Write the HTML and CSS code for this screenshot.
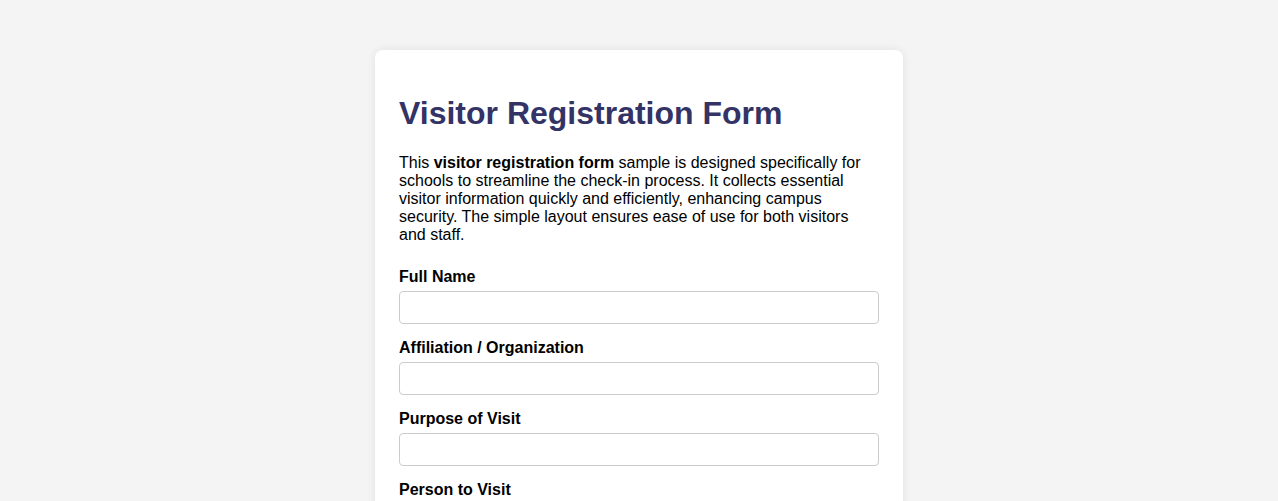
FILE: index.html
```html
<!DOCTYPE html>
<html lang="en">
<head>
<meta charset="utf-8">
<title>Visitor Registration Form</title>
<link rel="stylesheet" href="styles.css">
</head>
<body>
<div class="card">
  <h1 class="title">Visitor Registration Form</h1>
  <p class="intro">This <strong>visitor registration form</strong> sample is designed specifically for schools to streamline the check-in process. It collects essential visitor information quickly and efficiently, enhancing campus security. The simple layout ensures ease of use for both visitors and staff.</p>
  <form class="form">
    <div class="group">
      <label class="label" for="name">Full Name</label>
      <input class="input" id="name" type="text">
    </div>
    <div class="group">
      <label class="label" for="org">Affiliation / Organization</label>
      <input class="input" id="org" type="text">
    </div>
    <div class="group">
      <label class="label" for="purpose">Purpose of Visit</label>
      <input class="input" id="purpose" type="text">
    </div>
    <div class="group">
      <label class="label" for="person">Person to Visit</label>
      <input class="input" id="person" type="text">
    </div>
    <div class="group">
      <label class="label" for="date">Date of Visit</label>
      <input class="input" id="date" type="text">
    </div>
  </form>
</div>
</body>
</html>
```
FILE: styles.css
```css
html, body {
  margin: 0;
  padding: 0;
}
body {
  background: #f4f4f4;
  font-family: "Liberation Sans", Arial, sans-serif;
  color: #000;
  padding: 50px 0;
}
.card {
  width: 480px;
  margin: 0 auto;
  background: #fff;
  padding: 24px;
  border-radius: 8px;
  box-shadow: 0 0 10px rgba(0, 0, 0, 0.08);
}
.title {
  font-size: 32px;
  margin: 21.44px 0;
  color: #333366;
}
.intro {
  font-size: 16px;
  margin: 0 0 24px;
}
.form {
  margin: 0;
}
.group {
  margin-bottom: 15px;
}
.label {
  display: block;
  font-weight: bold;
  font-size: 16px;
  margin-bottom: 5px;
}
.input {
  display: block;
  box-sizing: border-box;
  width: 100%;
  height: 33px;
  padding: 8px;
  border: 1px solid #ccc;
  border-radius: 4px;
  font-family: inherit;
  font-size: 14px;
  background: #fff;
}
```
